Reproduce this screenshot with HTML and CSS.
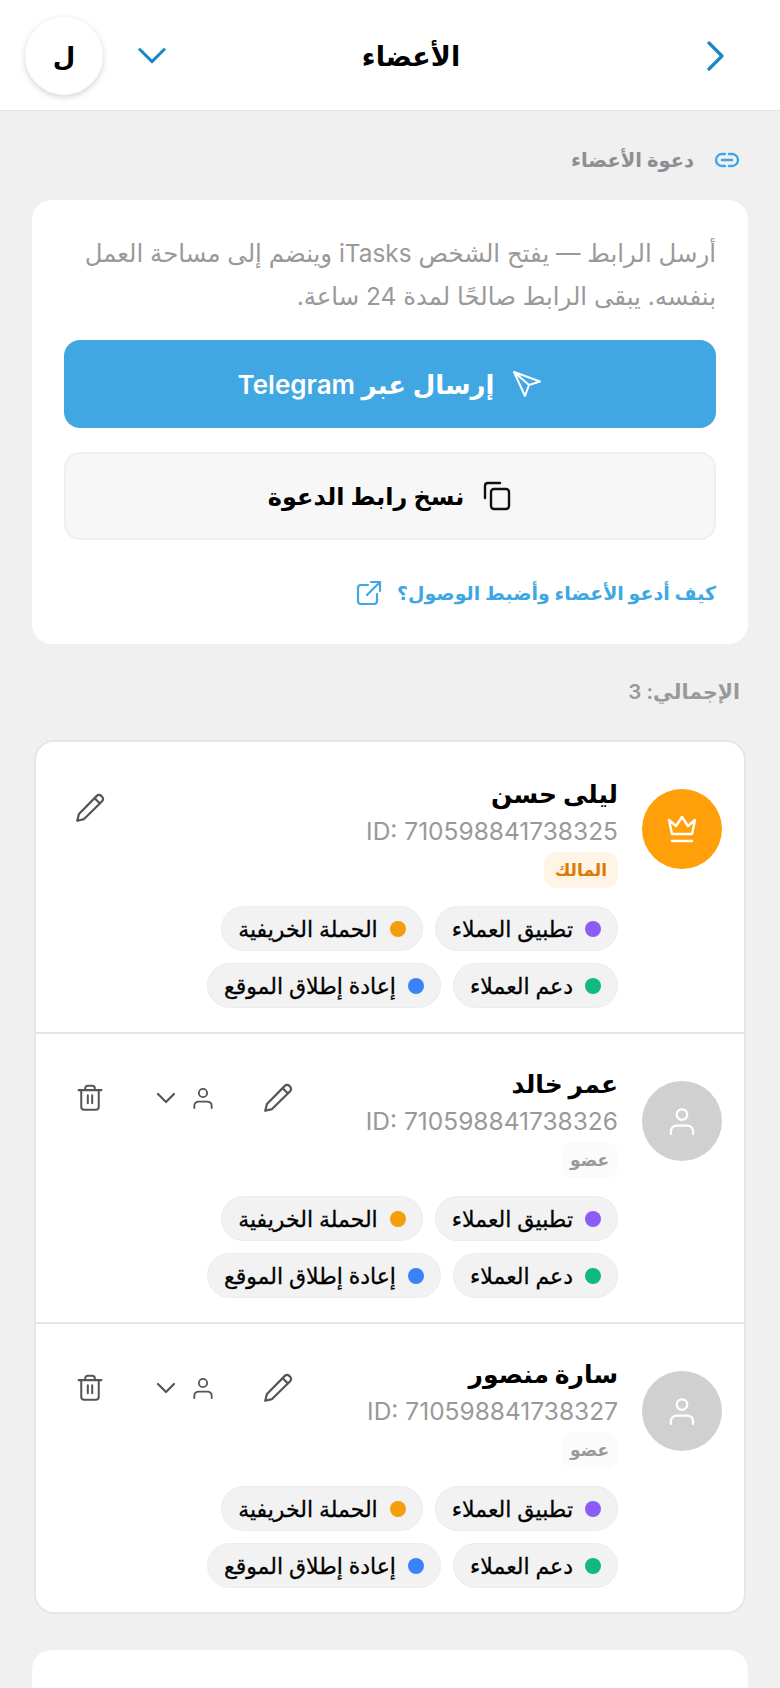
FILE: index.html
```html
<!DOCTYPE html>
<html lang="ar" dir="rtl">
<head>
    <meta charset="UTF-8">
    <meta name="viewport" content="width=device-width, initial-scale=1.0">
    <title>الأعضاء</title>
    <link rel="stylesheet" href="styles.css">
</head>
<body>
    <svg class="icon-defs" width="0" height="0">
        <symbol id="i-pencil" viewBox="0 0 32 32"><path d="M4 28l1.600-6.400L22.400 4.600c1.200-1.200 3-1.200 4.200 0l.8.8c1.200 1.200 1.200 3 0 4.200L10.400 26.400zM20.400 6.800l5 5" fill="none" stroke="currentColor" stroke-width="2.100" stroke-linecap="round" stroke-linejoin="round"/></symbol>
        <symbol id="i-user" viewBox="0 0 24 24"><circle cx="12" cy="6.500" r="4.500" fill="none" stroke="currentColor" stroke-width="2"/><path d="M2.500 23v-2c0-3 2-5 5-5h9c3 0 5 2 5 5v2" fill="none" stroke="currentColor" stroke-width="2" stroke-linecap="round"/></symbol>
        <symbol id="i-trash" viewBox="0 0 32 32"><path d="M3 7h26M6 7v19c0 2 1.300 3.300 3.300 3.300h13.400c2 0 3.300-1.300 3.300-3.300V7M10.500 7V5c0-2 1.200-3 3-3h5c1.800 0 3 1 3 3v2M13.500 13v9M18.500 13v9" fill="none" stroke="currentColor" stroke-width="2.300" stroke-linecap="round" stroke-linejoin="round"/></symbol>
        <symbol id="i-chevron" viewBox="0 0 20 12"><path d="M2 2l8 8 8-8" fill="none" stroke="currentColor" stroke-width="2.200" stroke-linecap="round" stroke-linejoin="round"/></symbol>
    </svg>

    <header class="topbar">
        <div class="topbar-back">
            <svg width="18" height="30" viewBox="0 0 18 30"><path d="M2 2l13 13L2 28" fill="none" stroke="#1b86c8" stroke-width="3.200" stroke-linecap="round" stroke-linejoin="round"/></svg>
        </div>
        <h1 class="topbar-title">الأعضاء</h1>
        <div class="topbar-user">
            <svg class="topbar-caret" width="28" height="18" viewBox="0 0 30 18"><path d="M2 2l13 13L28 2" fill="none" stroke="#1b86c8" stroke-width="3.200" stroke-linecap="round" stroke-linejoin="round"/></svg>
            <div class="topbar-avatar">ل</div>
        </div>
    </header>

    <main class="content">
        <div class="section-label">
            <svg width="26" height="16" viewBox="0 0 26 16"><path d="M11 2H8a6 6 0 0 0 0 12h3M15 2h3a6 6 0 0 1 0 12h-3M8 8h10" fill="none" stroke="#40a7e3" stroke-width="2.400" stroke-linecap="round"/></svg>
            <span>دعوة الأعضاء</span>
        </div>

        <section class="card invite">
            <p class="invite-text">أرسل الرابط — يفتح الشخص iTasks وينضم إلى مساحة العمل بنفسه. يبقى الرابط صالحًا لمدة 24 ساعة.</p>
            <button class="btn btn-telegram">
                <svg width="30" height="30" viewBox="0 0 30 30"><path d="M2 3l26 9.500-11 3.500-4 11zM17 16L2 3" fill="none" stroke="#fff" stroke-width="2" stroke-linejoin="round"/></svg>
                <span>إرسال عبر Telegram</span>
            </button>
            <button class="btn btn-copy">
                <svg width="30" height="30" viewBox="0 0 30 30"><rect x="9" y="8" width="18" height="20" rx="3" fill="none" stroke="#111" stroke-width="2.400"/><path d="M3 17V5c0-1.700 1.300-3 3-3h12" fill="none" stroke="#111" stroke-width="2.400" stroke-linecap="round"/></svg>
                <span>نسخ رابط الدعوة</span>
            </button>
            <a class="invite-link" href="#">
                <span>كيف أدعو الأعضاء وأضبط الوصول؟</span>
                <svg width="26" height="26" viewBox="0 0 26 26"><path d="M12 5H5c-1.700 0-3 1.300-3 3v13c0 1.700 1.300 3 3 3h13c1.700 0 3-1.300 3-3v-7M15 2h9v9M24 2L11 15" fill="none" stroke="#40a7e3" stroke-width="2.200" stroke-linecap="round" stroke-linejoin="round"/></svg>
            </a>
        </section>

        <div class="total">الإجمالي: 3</div>

        <section class="card members">
            <article class="member member-owner">
                <div class="avatar avatar-owner">
                    <svg width="30" height="28" viewBox="0 0 30 28"><path d="M5 19L2 5l7 6 6-9 6 9 7-6-3 14zM5 26h20" fill="none" stroke="#fff" stroke-width="2.400" stroke-linecap="round" stroke-linejoin="round"/></svg>
                </div>
                <div class="member-body">
                    <div class="member-head">
                        <div class="member-info">
                            <div class="member-name">ليلى حسن</div>
                            <div class="member-id" dir="ltr">ID: 710598841738325</div>
                            <span class="badge badge-owner">المالك</span>
                        </div>
                        <div class="actions">
                            <button class="action"><svg width="34" height="34"><use href="#i-pencil"/></svg></button>
                        </div>
                    </div>
                    <div class="chips">
                        <span class="chip"><i class="dot dot-purple"></i>تطبيق العملاء</span>
                        <span class="chip"><i class="dot dot-orange"></i>الحملة الخريفية</span>
                        <span class="chip"><i class="dot dot-green"></i>دعم العملاء</span>
                        <span class="chip"><i class="dot dot-blue"></i>إعادة إطلاق الموقع</span>
                    </div>
                </div>
            </article>

            <article class="member">
                <div class="avatar"><svg width="28" height="28"><use href="#i-user"/></svg></div>
                <div class="member-body">
                    <div class="member-head">
                        <div class="member-info">
                            <div class="member-name">عمر خالد</div>
                            <div class="member-id" dir="ltr">ID: 710598841738326</div>
                            <span class="badge">عضو</span>
                        </div>
                        <div class="actions">
                            <button class="action"><svg width="34" height="34"><use href="#i-pencil"/></svg></button>
                            <button class="action action-role">
                                <svg width="22" height="24"><use href="#i-user"/></svg>
                                <svg width="20" height="12"><use href="#i-chevron"/></svg>
                            </button>
                            <button class="action"><svg width="28" height="32"><use href="#i-trash"/></svg></button>
                        </div>
                    </div>
                    <div class="chips">
                        <span class="chip"><i class="dot dot-purple"></i>تطبيق العملاء</span>
                        <span class="chip"><i class="dot dot-orange"></i>الحملة الخريفية</span>
                        <span class="chip"><i class="dot dot-green"></i>دعم العملاء</span>
                        <span class="chip"><i class="dot dot-blue"></i>إعادة إطلاق الموقع</span>
                    </div>
                </div>
            </article>

            <article class="member">
                <div class="avatar"><svg width="28" height="28"><use href="#i-user"/></svg></div>
                <div class="member-body">
                    <div class="member-head">
                        <div class="member-info">
                            <div class="member-name">سارة منصور</div>
                            <div class="member-id" dir="ltr">ID: 710598841738327</div>
                            <span class="badge">عضو</span>
                        </div>
                        <div class="actions">
                            <button class="action"><svg width="34" height="34"><use href="#i-pencil"/></svg></button>
                            <button class="action action-role">
                                <svg width="22" height="24"><use href="#i-user"/></svg>
                                <svg width="20" height="12"><use href="#i-chevron"/></svg>
                            </button>
                            <button class="action"><svg width="28" height="32"><use href="#i-trash"/></svg></button>
                        </div>
                    </div>
                    <div class="chips">
                        <span class="chip"><i class="dot dot-purple"></i>تطبيق العملاء</span>
                        <span class="chip"><i class="dot dot-orange"></i>الحملة الخريفية</span>
                        <span class="chip"><i class="dot dot-green"></i>دعم العملاء</span>
                        <span class="chip"><i class="dot dot-blue"></i>إعادة إطلاق الموقع</span>
                    </div>
                </div>
            </article>
        </section>

        <section class="card next-card"></section>
    </main>
</body>
</html>
```

FILE: styles.css
```css
* {
    box-sizing: border-box;
}
html, body {
    margin: 0;
    padding: 0;
    height: 1688px;
    overflow: hidden;
}
body {
    background-color: #f0f0f0;
    color: #000;
    font-family: Inter, "Noto Sans", "DejaVu Sans", sans-serif;
}
.icon-defs {
    position: absolute;
}
.topbar {
    height: 111px;
    display: flex;
    align-items: center;
    justify-content: space-between;
    padding: 2px 24px 0 25px;
    background-color: #fff;
    border-bottom: 1px solid #e2e2e2;
}
.topbar-back {
    width: 100px;
    display: flex;
    justify-content: flex-start;
    padding-right: 31px;
}
.topbar-title {
    margin: 0;
    font-size: 27px;
    font-weight: 700;
}
.topbar-user {
    display: flex;
    align-items: center;
    gap: 35px;
}
.topbar-avatar {
    width: 78px;
    height: 78px;
    border-radius: 50%;
    background-color: #fff;
    box-shadow: 0 2px 6px rgba(0, 0, 0, 0.18);
    display: flex;
    align-items: center;
    justify-content: center;
    font-size: 26px;
    font-weight: 600;
}
.content {
    padding: 36px 32px 0;
}
.section-label {
    display: flex;
    align-items: center;
    gap: 20px;
    height: 26px;
    padding: 0 8px;
    color: #8e8e93;
    font-size: 19.5px;
    font-weight: 600;
}
.card {
    background-color: #fff;
    border-radius: 20px;
}
.invite {
    margin-top: 27px;
    padding: 32px;
    height: 444px;
}
.invite-text {
    margin: 0;
    height: 76px;
    color: #999;
    font-size: 24.4px;
    line-height: 43px;
}
.btn {
    width: 100%;
    height: 88px;
    display: flex;
    align-items: center;
    justify-content: center;
    gap: 18px;
    border-radius: 16px;
    font-family: inherit;
    font-size: 26px;
    font-weight: 600;
}
.btn-telegram {
    margin-top: 32px;
    background-color: #40a7e3;
    color: #fff;
    border: none;
}
.btn-copy {
    margin-top: 24px;
    background-color: #f7f7f7;
    color: #000;
    border: 2px solid #efefef;
    font-size: 24px;
}
.invite-link {
    margin-top: 38px;
    height: 30px;
    display: flex;
    align-items: center;
    gap: 15px;
    color: #40a7e3;
    font-size: 19px;
    font-weight: 600;
    text-decoration: none;
}
.total {
    margin-top: 32px;
    padding: 0 8px 0 0;
    height: 32px;
    line-height: 32px;
    color: #999;
    font-size: 20.5px;
    font-weight: 600;
}
.members {
    margin: 32px 2px 0;
    border: 2px solid #e6e6e6;
    overflow: hidden;
}
.member {
    display: flex;
    gap: 24px;
    height: 290px;
    padding: 30px 22px 0 32px;
    border-bottom: 2px solid #e6e6e6;
}
.member-owner {
    height: 292px;
    padding-top: 32px;
}
.member:last-child {
    height: 288px;
    border-bottom: none;
}
.avatar {
    flex: none;
    width: 80px;
    height: 80px;
    margin-top: 17px;
    border-radius: 50%;
    background-color: #d0d0d0;
    color: #fff;
    display: flex;
    align-items: center;
    justify-content: center;
}
.avatar-owner {
    margin-top: 15px;
    background-color: #ff9f0a;
}
.member-body {
    flex: 1;
    min-width: 0;
}
.member-head {
    display: flex;
    justify-content: space-between;
    align-items: flex-start;
    height: 132px;
}
.member-info {
    display: flex;
    flex-direction: column;
    align-items: flex-start;
}
.member-name {
    font-size: 25px;
    font-weight: 700;
    line-height: 40px;
}
.member-id {
    color: #999;
    font-size: 24.5px;
    line-height: 34px;
}
.badge {
    margin-top: 4px;
    padding: 0 9px;
    height: 36px;
    line-height: 36px;
    border-radius: 12px;
    background-color: #fbfbfb;
    color: #999;
    font-size: 17px;
    font-weight: 700;
}
.badge-owner {
    padding: 0 11px;
    background-color: #fff4e5;
    color: #dd7a00;
}
.actions {
    display: flex;
    align-items: center;
    margin-top: 12px;
}
.action {
    width: 44px;
    height: 44px;
    padding: 0;
    border: none;
    background: none;
    color: #555;
    display: flex;
    align-items: center;
    justify-content: center;
}
.action-role {
    width: 70px;
    gap: 16px;
    margin: 0 36px 0 38px;
}
.avatar svg, .action svg {
    flex: none;
}
.chips {
    display: flex;
    flex-wrap: wrap;
    gap: 12px;
    max-width: 420px;
}
.chip {
    height: 45px;
    display: inline-flex;
    align-items: center;
    gap: 12px;
    padding: 0 16px;
    border-radius: 23px;
    background-color: #f2f2f2;
    border: 1px solid #ececec;
    font-size: 22px;
    font-weight: 500;
    white-space: nowrap;
    -webkit-text-stroke: 0.3px #000;
}
.dot {
    width: 16px;
    height: 16px;
    border-radius: 50%;
}
.dot-purple { background-color: #8b5cf6; }
.dot-orange { background-color: #f59e0b; }
.dot-green { background-color: #10b981; }
.dot-blue { background-color: #3b82f6; }
.next-card {
    margin-top: 36px;
    height: 100px;
}
```
